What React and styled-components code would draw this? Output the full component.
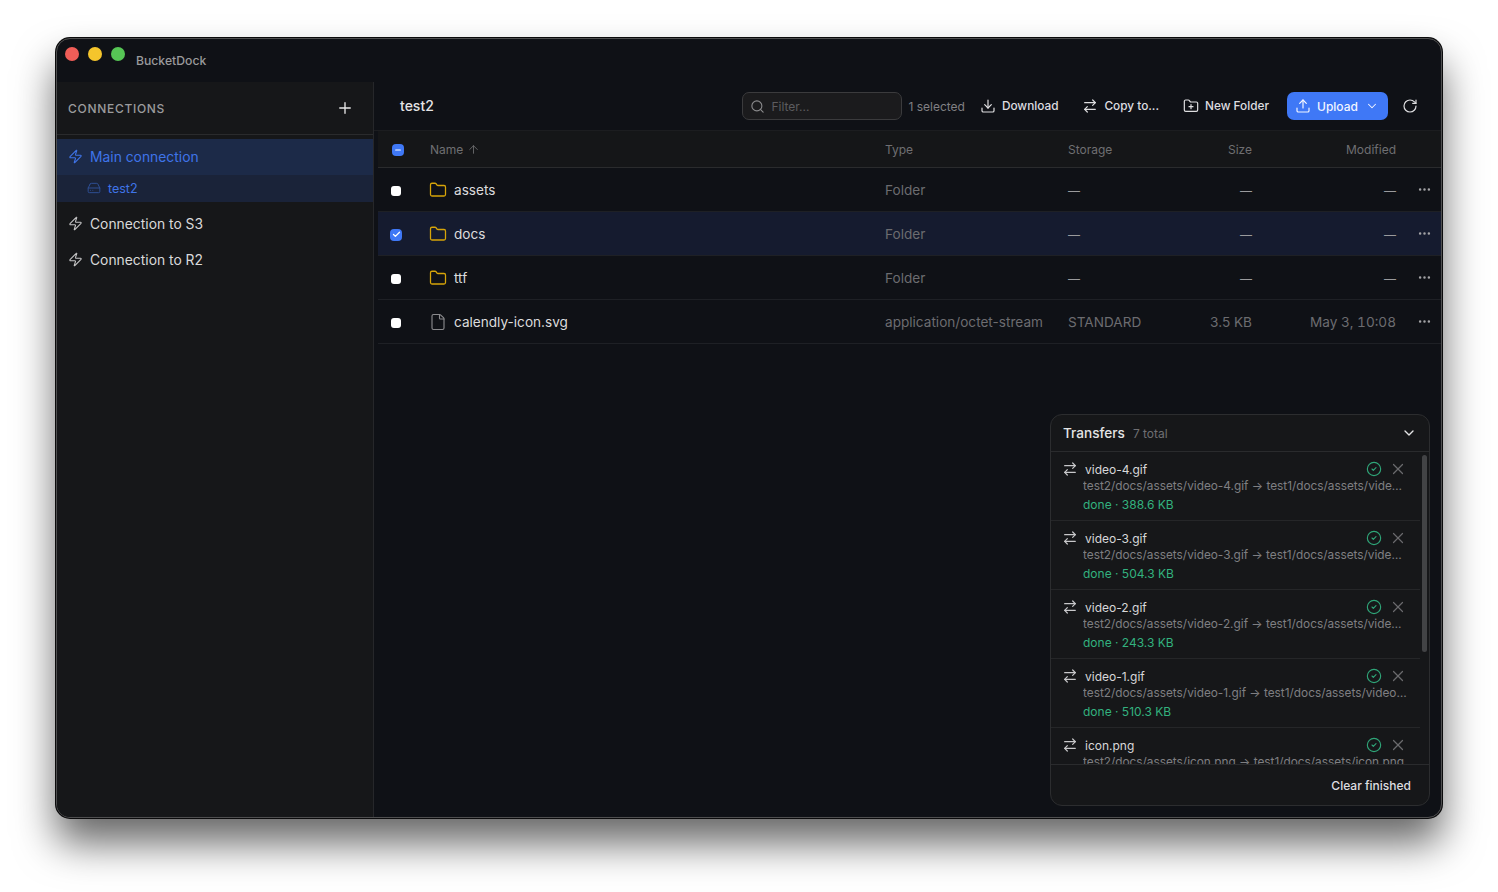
import React from "react";
import styled, { createGlobalStyle } from "styled-components";
import {
  Zap, Plus, HardDrive, Search, Download, ArrowRightLeft, FolderPlus, Upload, ChevronDown,
  RotateCw, ArrowUp, Folder, File, Ellipsis, CircleCheck, X, Check, Minus,
} from "lucide-react";

const Global = createGlobalStyle`
  html, body { margin: 0; padding: 0; background: #fff; }
  body { font-family: Inter, "Liberation Sans", sans-serif; -webkit-font-smoothing: antialiased; }
  * { box-sizing: border-box; }
`;

const Page = styled.div`
  width: 1498px;
  height: 892px;
  padding: 38px 56px 74px;
  overflow: hidden;
  background: #fff;
`;
const Win = styled.div`
  position: relative;
  width: 1386px;
  height: 780px;
  display: flex;
  flex-direction: column;
  background: #0f1116;
  border: 1px solid #4f4f50;
  border-radius: 14px;
  overflow: hidden;
  box-shadow: 0 0 0 1px #0b0b0c, 0 25px 40px rgba(0, 0, 0, 0.6);
`;
const TitleBar = styled.div`
  height: 43px;
  flex: none;
  display: flex;
  align-items: flex-start;
  padding: 8px 0 0 8px;
`;
const Light = styled.span`
  width: 14px;
  height: 14px;
  border-radius: 50%;
  margin-right: 9px;
  background: ${(p) => p.$c};
`;
const AppName = styled.span`
  margin: 7px 0 0 2px;
  font-size: 12.2px;
  font-weight: 500;
  line-height: 14px;
  color: #9a9a9c;
`;
const Body = styled.div`
  flex: 1;
  min-height: 0;
  display: flex;
`;
const Sidebar = styled.aside`
  width: 317px;
  flex: none;
  background: #161719;
  border-right: 1px solid #26272a;
`;
const SideHead = styled.div`
  height: 53px;
  display: flex;
  align-items: center;
  justify-content: space-between;
  padding: 0 19px 0 11px;
  border-bottom: 1px solid #2a2b2d;
  margin-bottom: 4px;
  color: #e8e8e8;
`;
const SideTitle = styled.span`
  font-size: 12px;
  font-weight: 500;
  letter-spacing: 0.7px;
  color: #9b9b9d;
`;
const ConnRow = styled.div`
  height: 36px;
  display: flex;
  align-items: center;
  gap: 7px;
  padding: 0 0 1px 11px;
  font-size: 13.85px;
  color: ${(p) => (p.$active ? "#3f74e8" : "#d9d9da")};
  background: ${(p) => (p.$active ? "#1c2a48" : "transparent")};
  svg { color: ${(p) => (p.$active ? "#3f74e8" : "#c4c4c5")}; }
`;
const BucketRow = styled.div`
  height: 27px;
  display: flex;
  align-items: center;
  gap: 7px;
  padding: 0 0 1px 30px;
  margin-bottom: 4px;
  font-size: 12.5px;
  color: #3f74e8;
  background: #1a2339;
  svg { color: #2f4f94; }
`;
const Main = styled.main`
  flex: 1;
  min-width: 0;
  position: relative;
  display: flex;
  flex-direction: column;
`;
const TopBar = styled.div`
  height: 49px;
  flex: none;
  display: flex;
  align-items: center;
  padding: 0 23px 1px 26px;
  border-bottom: 1px solid #1c1d20;
`;
const Crumb = styled.span`
  flex: 1;
  font-size: 14px;
  font-weight: 500;
  color: #e4e4e5;
`;
const Filter = styled.div`
  width: 160px;
  height: 28px;
  display: flex;
  align-items: center;
  gap: 6px;
  padding: 1px 0 0 7px;
  margin-right: 6px;
  background: #1b1b1d;
  border: 1px solid #3b3b3d;
  border-radius: 7px;
  font-size: 12px;
  color: #5c5c5f;
  svg { color: #8a8a8c; }
`;
const Selected = styled.span`
  padding-top: 1px;
  font-size: 12px;
  color: #808083;
  margin-right: 4px;
`;
const ToolBtn = styled.div`
  height: 28px;
  display: flex;
  align-items: center;
  gap: 6px;
  padding: 1px 11px 0;
  margin-right: 2px;
  font-size: 11.8px;
  font-weight: 500;
  color: #dedee0;
`;
const UploadBtn = styled.div`
  width: 101px;
  height: 28px;
  display: flex;
  align-items: center;
  gap: 6px;
  padding: 1px 0 0 8px;
  border-radius: 7px;
  background: #3f78f6;
  font-size: 12px;
  font-weight: 500;
  color: #f2f5ff;
  margin: 0 14px 0 5px;
`;
const Caret = styled(ChevronDown)`
  margin-left: 1px;
`;
const Refresh = styled(RotateCw)`
  color: #dedee0;
`;
const Table = styled.div`
  margin-left: 4px;
`;
const columns = "40px 455px 183px 120px 88px 144px 1fr";
const HeadRow = styled.div`
  height: 37px;
  display: grid;
  grid-template-columns: ${columns};
  align-items: center;
  background: #151618;
  border-bottom: 1px solid #2a2b2d;
  font-size: 12px;
  color: #6f6f72;
`;
const Row = styled.div`
  height: 44px;
  display: grid;
  grid-template-columns: ${columns};
  align-items: center;
  background: ${(p) => (p.$selected ? "#151b2f" : "transparent")};
  border-bottom: 1px solid #1e2025;
  font-size: 13.6px;
  color: #6c6c70;
`;
const Cell = styled.div`
  padding: 0 12px;
  white-space: nowrap;
  text-align: ${(p) => (p.$right ? "right" : "left")};
`;
const ModCell = styled(Cell)`
  font-variant-numeric: tabular-nums;
`;
const NameHead = styled(Cell)`
  display: flex;
  align-items: center;
  gap: 4px;
`;
const NameCell = styled(Cell)`
  display: flex;
  align-items: center;
  gap: 7px;
  padding-left: 11px;
  color: #dcdcdd;
  svg { flex: none; color: ${(p) => (p.$file ? "#8b8b8e" : "#d6a409")}; }
`;
const BoxCell = styled.div`
  display: flex;
  padding-left: ${(p) => p.$pad}px;
  padding-top: ${(p) => p.$top}px;
`;
const Box = styled.span`
  width: ${(p) => p.$size}px;
  height: ${(p) => p.$size}px;
  display: flex;
  align-items: center;
  justify-content: center;
  border-radius: ${(p) => (p.$size > 10 ? 4 : 3)}px;
  background: ${(p) => (p.$blue ? "#3f78f6" : "#fff")};
  color: #fff;
`;
const Dash = styled.span`
  font-size: 12px;
  font-weight: 500;
  color: #9a9a9d;
`;
const Dots = styled.div`
  display: flex;
  justify-content: flex-end;
  padding: 0 9px 1px 0;
  color: #a2a2a5;
`;
const Panel = styled.section`
  position: absolute;
  right: 11px;
  bottom: 11px;
  width: 380px;
  height: 392px;
  display: flex;
  flex-direction: column;
  background: #161719;
  border: 1px solid #2c2d2f;
  border-radius: 12px;
  overflow: hidden;
`;
const PanelHead = styled.div`
  height: 37px;
  flex: none;
  display: flex;
  align-items: center;
  gap: 8px;
  padding: 0 12px;
  border-bottom: 1px solid #2a2b2d;
`;
const PanelTitle = styled.span`
  font-size: 13.6px;
  font-weight: 500;
  color: #e4e4e5;
`;
const PanelCount = styled.span`
  flex: 1;
  font-size: 12px;
  color: #6f6f72;
`;
const Collapse = styled(ChevronDown)`
  color: #e4e4e5;
`;
const List = styled.div`
  flex: 1;
  min-height: 0;
  overflow: hidden;
  padding-right: 9px;
`;
const Thumb = styled.div`
  position: absolute;
  top: 40px;
  right: 2px;
  width: 5px;
  height: 197px;
  border-radius: 3px;
  background: #424345;
`;
const Item = styled.div`
  height: 69px;
  padding: 9px 12px 0 13px;
  border-bottom: 1px solid #252628;
`;
const ItemTop = styled.div`
  display: flex;
  align-items: center;
  height: 16px;
  color: #d8d8d9;
  svg { flex: none; }
`;
const ItemIcon = styled(ArrowRightLeft)`
  margin-left: -2px;
  color: #c8c8ca;
`;
const ItemName = styled.span`
  flex: 1;
  margin-left: 7px;
  font-size: 12px;
`;
const Ok = styled(CircleCheck)`
  color: #2fa578;
`;
const Close = styled(X)`
  color: #6a6a6d;
  margin: 0 1px 0 7px;
`;
const ItemPath = styled.div`
  margin: 1px 0 0 19px;
  font-size: 11.84px;
  line-height: 16px;
  color: #7f7f82;
  white-space: nowrap;
  overflow: hidden;
  text-overflow: ellipsis;
`;
const ItemStatus = styled.div`
  margin: 3px 0 0 19px;
  font-size: 12px;
  line-height: 16px;
  color: #33b27f;
`;
const PanelFoot = styled.div`
  height: 41px;
  flex: none;
  display: flex;
  align-items: center;
  justify-content: flex-end;
  padding: 0 18px 0 0;
  border-top: 1px solid #2a2b2d;
  font-size: 12px;
  font-weight: 500;
  color: #dedee0;
`;

const rows = [
  { name: "assets", type: "Folder", storage: "—", size: "—", mod: "—", folder: true },
  { name: "docs", type: "Folder", storage: "—", size: "—", mod: "—", folder: true, selected: true },
  { name: "ttf", type: "Folder", storage: "—", size: "—", mod: "—", folder: true },
  { name: "calendly-icon.svg", type: "application/octet-stream", storage: "STANDARD", size: "3.5 KB", mod: "May 3, 10:08" },
];
const transfers = [
  ["video-4.gif", "388.6 KB"],
  ["video-3.gif", "504.3 KB"],
  ["video-2.gif", "243.3 KB"],
  ["video-1.gif", "510.3 KB"],
  ["icon.png", "12.4 KB"],
];
const val = (v) => (v === "—" ? <Dash>—</Dash> : v);

export default function App() {
  return (
    <Page>
      <Global />
      <Win>
        <TitleBar>
          <Light $c="#f05d58" />
          <Light $c="#f5c52c" />
          <Light $c="#56c655" />
          <AppName>BucketDock</AppName>
        </TitleBar>
        <Body>
          <Sidebar>
            <SideHead>
              <SideTitle>CONNECTIONS</SideTitle>
              <Plus size={18} strokeWidth={1.8} />
            </SideHead>
            <ConnRow $active><Zap size={15} strokeWidth={1.8} />Main connection</ConnRow>
            <BucketRow><HardDrive size={14} strokeWidth={1.7} />test2</BucketRow>
            <ConnRow><Zap size={15} strokeWidth={1.8} />Connection to S3</ConnRow>
            <ConnRow><Zap size={15} strokeWidth={1.8} />Connection to R2</ConnRow>
          </Sidebar>
          <Main>
            <TopBar>
              <Crumb>test2</Crumb>
              <Filter><Search size={15} strokeWidth={1.8} />Filter...</Filter>
              <Selected>1 selected</Selected>
              <ToolBtn><Download size={16} strokeWidth={1.8} />Download</ToolBtn>
              <ToolBtn><ArrowRightLeft size={16} strokeWidth={1.8} />Copy to...</ToolBtn>
              <ToolBtn><FolderPlus size={16} strokeWidth={1.8} />New Folder</ToolBtn>
              <UploadBtn><Upload size={16} strokeWidth={1.8} />Upload<Caret size={14} strokeWidth={1.8} /></UploadBtn>
              <Refresh size={16} strokeWidth={1.8} />
            </TopBar>
            <Table>
              <HeadRow>
                <BoxCell $pad={14} $top={1}><Box $size={12} $blue><Minus size={8} strokeWidth={3.5} /></Box></BoxCell>
                <NameHead>Name <ArrowUp size={13} strokeWidth={1.6} /></NameHead>
                <Cell>Type</Cell>
                <Cell>Storage</Cell>
                <Cell $right>Size</Cell>
                <Cell $right>Modified</Cell>
                <div />
              </HeadRow>
              {rows.map((r) => (
                <Row key={r.name} $selected={r.selected}>
                  {r.selected ? (
                    <BoxCell $pad={12} $top={2}><Box $size={12} $blue><Check size={9} strokeWidth={3.5} /></Box></BoxCell>
                  ) : (
                    <BoxCell $pad={13} $top={2}><Box $size={10} /></BoxCell>
                  )}
                  <NameCell $file={!r.folder}>
                    {r.folder ? <Folder size={18} strokeWidth={1.7} /> : <File size={18} strokeWidth={1.5} />}
                    {r.name}
                  </NameCell>
                  <Cell>{r.type}</Cell>
                  <Cell>{val(r.storage)}</Cell>
                  <Cell $right>{val(r.size)}</Cell>
                  <ModCell $right>{val(r.mod)}</ModCell>
                  <Dots><Ellipsis size={15} strokeWidth={2} /></Dots>
                </Row>
              ))}
            </Table>
            <Panel>
              <PanelHead>
                <PanelTitle>Transfers</PanelTitle>
                <PanelCount>7 total</PanelCount>
                <Collapse size={16} strokeWidth={2} />
              </PanelHead>
              <List>
                {transfers.map(([name, size]) => (
                  <Item key={name}>
                    <ItemTop>
                      <ItemIcon size={16} strokeWidth={1.8} />
                      <ItemName>{name}</ItemName>
                      <Ok size={16} strokeWidth={1.7} />
                      <Close size={18} strokeWidth={1.6} />
                    </ItemTop>
                    <ItemPath>test2/docs/assets/{name} → test1/docs/assets/{name}</ItemPath>
                    <ItemStatus>done · {size}</ItemStatus>
                  </Item>
                ))}
              </List>
              <Thumb />
              <PanelFoot>Clear finished</PanelFoot>
            </Panel>
          </Main>
        </Body>
      </Win>
    </Page>
  );
}
